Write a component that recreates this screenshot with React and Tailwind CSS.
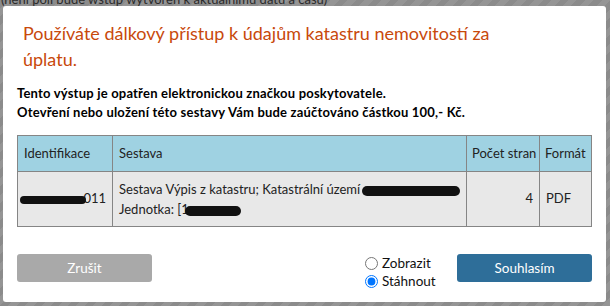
import { useState } from 'react';

const ui = { fontFamily: 'Lato, "Noto Sans", sans-serif' };

function Blob({ className }) {
  return <span className={`inline-block bg-[#111] rounded-full align-middle ${className}`} />;
}

export default function App() {
  const [mode, setMode] = useState('download');

  return (
    <div className="relative w-[610px] h-[306px] overflow-hidden bg-[#8e8e8e]" style={ui}>
      {/* stránka pod dialogem */}
      <div className="absolute inset-0 bg-[repeating-linear-gradient(135deg,#8b8b8b_0px,#8b8b8b_6px,#959595_6px,#959595_12px)]" />
      <div className="absolute left-[1px] top-[-10px] text-[13px] text-[#2a2a2a] whitespace-nowrap">
        (není poli bude wstup wytvoren k aktuálnímu datu a času)
      </div>

      <div className="absolute left-[3px] top-[6px] w-[603px] h-[296px] bg-white rounded-[3px] pl-[14px] pr-[14px] flex flex-col">
        <h1 className="pl-[6px] pt-[14px] text-[18px] leading-[26px] text-[#c8490c] font-normal">
          Používáte dálkový přístup k údajům katastru nemovitostí za
          <br />
          úplatu.
        </h1>

        <div className="mt-[12px] text-[13px] leading-[19px] font-bold tracking-[0.2px] text-black">
          <p>Tento výstup je opatřen elektronickou značkou poskytovatele.</p>
          <p>Otevření nebo uložení této sestavy Vám bude zaúčtováno částkou 100,- Kč.</p>
        </div>

        <table className="mt-[13px] w-full border-collapse text-[13px] text-[#222] table-fixed">
          <colgroup>
            <col className="w-[95px]" />
            <col />
            <col className="w-[73px]" />
            <col className="w-[52px]" />
          </colgroup>
          <thead>
            <tr className="bg-[#9fd2e2] h-[36px]">
              <th className="border border-[#858585] px-[6px] text-left font-normal">Identifikace</th>
              <th className="border border-[#858585] px-[6px] text-left font-normal">Sestava</th>
              <th className="border border-[#858585] px-[5px] text-left font-normal whitespace-nowrap">Počet stran</th>
              <th className="border border-[#858585] px-[5px] text-left font-normal">Formát</th>
            </tr>
          </thead>
          <tbody>
            <tr className="bg-[#e8e8e8] h-[55px]">
              <td className="border border-[#858585] pr-[6px] text-right whitespace-nowrap">
                <Blob className="w-[66px] h-[8px] -mr-[3px] relative" />011
              </td>
              <td className="border border-[#858585] px-[6px] leading-[20px]">
                <div className="whitespace-nowrap">
                  Sestava Výpis z katastru; Katastrální území <Blob className="w-[98px] h-[10px] -ml-[1px]" />
                </div>
                <div className="whitespace-nowrap">
                  Jednotka: [1<Blob className="w-[56px] h-[10px] -ml-[4px]" />
                </div>
              </td>
              <td className="border border-[#858585] px-[6px] text-right">4</td>
              <td className="border border-[#858585] px-[6px]">PDF</td>
            </tr>
          </tbody>
        </table>

        <div className="mt-[27px] flex items-start">
          <button className="w-[135px] h-[28px] rounded-[3px] bg-[#a9a9a9] text-white text-[13.5px]">Zrušit</button>
          <div className="ml-[213px] flex flex-col text-[13.5px] leading-[18px] text-[#111]">
            <label className="flex items-center gap-[4px]">
              <input type="radio" name="m" checked={mode === 'view'} onChange={() => setMode('view')} className="m-0 w-[13px] h-[13px]" />
              Zobrazit
            </label>
            <label className="flex items-center gap-[4px]">
              <input type="radio" name="m" checked={mode === 'download'} onChange={() => setMode('download')} className="m-0 w-[13px] h-[13px]" />
              Stáhnout
            </label>
          </div>
          <button className="ml-auto w-[135px] h-[28px] rounded-[3px] bg-[#2e6e99] text-white text-[13.5px]">Souhlasím</button>
        </div>
      </div>
    </div>
  );
}
